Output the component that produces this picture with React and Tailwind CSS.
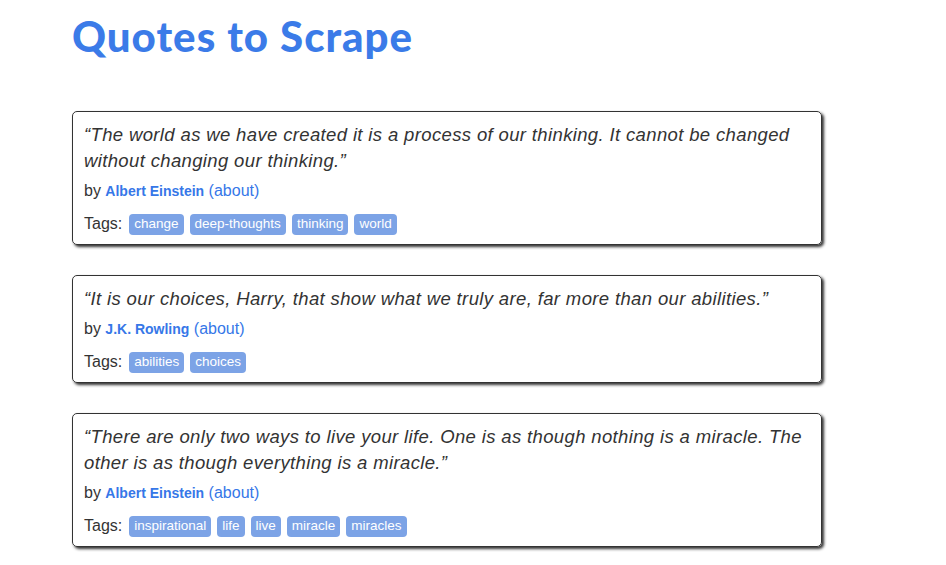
const quotes = [
    {
        text: "“The world as we have created it is a process of our thinking. It cannot be changed without changing our thinking.”",
        author: "Albert Einstein",
        tags: ["change", "deep-thoughts", "thinking", "world"],
    },
    {
        text: "“It is our choices, Harry, that show what we truly are, far more than our abilities.”",
        author: "J.K. Rowling",
        tags: ["abilities", "choices"],
    },
    {
        text: "“There are only two ways to live your life. One is as though nothing is a miracle. The other is as though everything is a miracle.”",
        author: "Albert Einstein",
        tags: ["inspirational", "life", "live", "miracle", "miracles"],
    },
];

function Quote({ quote }) {
    return (
        <div className="mb-[30px] rounded-[5px] border border-[#333] px-[11px] pt-[10px] pb-[9px] shadow-[2px_2px_3px_#333]">
            <p className="text-[18.5px] italic leading-[26px] tracking-[0.36px] text-[#333]">{quote.text}</p>
            <p className="mt-[6px] text-[16px] leading-[22px] text-[#333]">
                by{" "}
                <span className="text-[14px] font-bold text-[#3677e8]">{quote.author}</span>{" "}
                <span className="text-[#3677e8]">(about)</span>
            </p>
            <div className="mt-[11px] flex items-center text-[16px] leading-[22px] text-[#333]">
                <span className="mr-[7px]">Tags:</span>
                <div className="flex gap-[6px]">
                    {quote.tags.map((tag) => (
                        <span
                            key={tag}
                            className="flex h-[21px] items-center rounded-[4px] bg-[#7ca3e6] px-[5px] text-[13.5px] text-white"
                        >
                            {tag}
                        </span>
                    ))}
                </div>
            </div>
        </div>
    );
}

export default function App() {
    return (
        <div className="min-h-screen bg-white font-['Liberation_Sans',Arial,sans-serif]">
            <div className="ml-[72px] w-[750px] pt-[10px]">
                <h1 className="font-['Lato',sans-serif] text-[42px] font-black leading-[52px] tracking-[1px] text-[#3b7be8]">
                    Quotes to Scrape
                </h1>
                <div className="mt-[49px]">
                    {quotes.map((q, i) => (
                        <Quote key={i} quote={q} />
                    ))}
                </div>
            </div>
        </div>
    );
}
